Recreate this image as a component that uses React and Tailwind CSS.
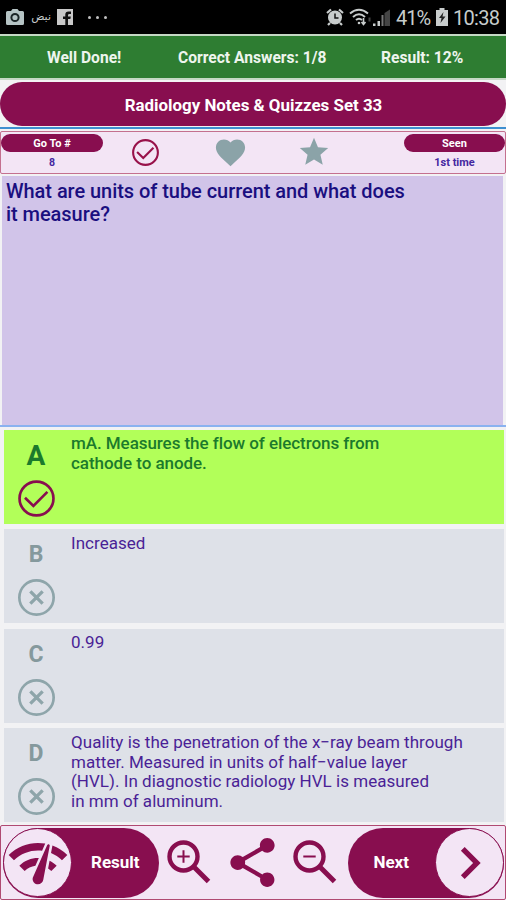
import React from 'react';
import { MdChevronRight, MdFavorite, MdNetworkCheck, MdShare, MdStar } from 'react-icons/md';

const options = [
  {
    letter: 'A',
    correct: true,
    lines: ['mA. Measures the flow of electrons from', 'cathode to anode.'],
  },
  { letter: 'B', lines: ['Increased'] },
  { letter: 'C', lines: ['0.99'] },
  {
    letter: 'D',
    lines: [
      'Quality is the penetration of the x−ray beam through',
      'matter. Measured in units of half−value layer',
      '(HVL). In diagnostic radiology HVL is measured',
      'in mm of aluminum.',
    ],
  },
];

const CheckCircle = ({ className, strokeWidth = 2.6 }) => (
  <svg viewBox="0 0 36 36" fill="none" stroke="currentColor" strokeWidth={strokeWidth} className={className}>
    <circle cx="18" cy="18" r="16.5" />
    <path d="M6.8 17.2 15 25.2 28.6 11.6" />
  </svg>
);

const CrossCircle = ({ className }) => (
  <svg viewBox="0 0 36 36" fill="none" stroke="currentColor" className={className}>
    <circle cx="18" cy="18" r="16.7" strokeWidth="2.6" />
    <path d="M12 12 24 24M24 12 12 24" strokeWidth="3.2" />
  </svg>
);

const Magnifier = ({ plus, className }) => (
  <svg viewBox="0 0 44 44" fill="none" stroke="currentColor" className={className}>
    <circle cx="16.500" cy="16.500" r="14" strokeWidth="4.400" />
    <path d="M26.500 26.500 41.500 41.500" strokeWidth="5" />
    <path d={plus ? 'M10.300 16.500h12.400M16.500 10.300v12.400' : 'M10.300 16.500h12.400'} strokeWidth="2" />
  </svg>
);

const StatusBar = () => (
  <div className="h-[34px] shrink-0 bg-black text-[#c6cccc] flex items-center justify-between pl-[6px] pr-[6px]">
    <div className="flex items-center">
      <svg viewBox="0 0 18 16" className="w-[18px] h-4">
        <path d="M5 2 6.500 0h5L13 2h3.500Q18 2 18 3.500v11Q18 16 16.500 16h-15Q0 16 0 14.500v-11Q0 2 1.500 2Z" fill="#b5c3c4" />
        <circle cx="9" cy="8.500" r="3.600" fill="none" stroke="#1b2526" strokeWidth="2" />
      </svg>
      <span dir="rtl" className="ml-[6px] w-[21px] text-[11px] leading-4 whitespace-nowrap font-['DejaVu_Sans',sans-serif]">نبض</span>
      <svg viewBox="0 0 16 16" className="ml-[6px] w-4 h-4">
        <path d="M0 0h16v16H0z" fill="#c9c9c9" />
        <path d="M8.300 16V10H6V7.400h2.300V5.600Q8.300 2.400 11.600 2.400H14V5h-1.600Q11 5 11 6.300v1.100h2.800L13.400 10H11v6Z" fill="#111" />
      </svg>
      <div className="ml-[15px] flex gap-[5px]">
        <i className="size-[3px] bg-[#c0c0c0] rounded-full" />
        <i className="size-[3px] bg-[#c0c0c0] rounded-full" />
        <i className="size-[3px] bg-[#c0c0c0] rounded-full" />
      </div>
    </div>
    <div className="flex items-center">
      <svg viewBox="0 0 18 18" className="w-[18px] h-[18px]">
        <circle cx="9" cy="9.500" r="7" fill="#c8cccc" />
        <path d="M1 5 5 1.500M17 5 13 1.500M4 15 2 17M14 15 16 17" stroke="#c8cccc" strokeWidth="2.200" />
        <path d="M9 5.500V10h3.500" stroke="#111" strokeWidth="1.500" fill="none" />
      </svg>
      <svg viewBox="0 0 22 18" className="ml-[5px] w-[22px] h-[18px]" fill="none" stroke="#c8cccc" strokeWidth="2">
        <path d="M1 5.500Q10 -2 19 5.500M4 9Q10 3.500 16 9M7 12Q10 9.500 13 12" />
        <circle cx="10" cy="15" r="1.300" fill="#c8cccc" stroke="none" />
        <path d="M14.500 10v6M12.500 14l2 2.500 2-2.500" strokeWidth="1.600" />
        <path d="M20.500 9.500v4" stroke="#444" />
      </svg>
      <svg viewBox="0 0 18 17" className="ml-[2px] w-[18px] h-[17px]">
        <path d="M0 17v-2.500h2.500V17zM4.500 17v-5H7v5z" fill="#c8cccc" />
        <path d="M8.500 17V6h2v11z" fill="#777" />
        <path d="M11.500 17V4L17 .5V17z" fill="#444" />
      </svg>
      <span className="ml-[5px] w-[34px] text-[20px] leading-[34px] tracking-[-1px] whitespace-nowrap pt-px">41%</span>
      <svg viewBox="0 0 12 18" className="ml-[6px] w-[12px] h-[18px]">
        <path d="M3.500 0h5v2H12v16H0V2h3.500z" fill="#c8cccc" />
        <path d="M7.500 4 3 10h2.500L4.500 15 9.500 8.500H6.500z" fill="#222" />
      </svg>
      <span className="ml-[5px] w-[47px] text-[20px] leading-[34px] tracking-[-0.7px] whitespace-nowrap pt-px">10:38</span>
    </div>
  </div>
);

const OptionCard = ({ letter, lines, correct }) => (
  <div className={`h-[94px] shrink-0 ml-[4px] mr-[2px] flex ${correct ? 'bg-[#b2ff59]' : 'bg-[#dee1e8]'}`}>
    <div className="w-[64px] shrink-0 flex flex-col items-center pt-[11px]">
      <span
        className={`font-bold leading-[30px] h-[39px] ${correct ? 'text-[#1b7a2c] text-[28px]' : 'text-[#85999d] text-[23px]'}`}
      >
        {letter}
      </span>
      {correct ? (
        <CheckCircle className="size-[37px] text-[#880e4f]" />
      ) : (
        <CrossCircle className="size-[37px] text-[#8ea5aa]" />
      )}
    </div>
    <div
      className={`pl-[3px] text-[17px] leading-[19.8px] whitespace-nowrap ${
        correct ? 'pt-[4px] font-medium tracking-[-0.06px] text-[#1b7a2c]' : 'pt-[4.6px] tracking-[0.03px] text-[#4a1f96]'
      }`}
    >
      {lines.map((line) => (
        <p key={line}>{line}</p>
      ))}
    </div>
  </div>
);

export default function App() {
  return (
    <div className="w-[506px] h-[900px] overflow-hidden flex flex-col bg-[#f2f2f4] font-[Roboto,sans-serif]">
      <StatusBar />

      <div className="h-[46px] shrink-0 border-y-2 border-[#c5d9c5] bg-[#2e7d32] text-[#eef5ee] font-bold text-[15.6px] leading-[42px] whitespace-nowrap flex pt-px">
        <span className="w-[131px] ml-[47px]">Well Done!</span>
        <span className="w-[203px]">Correct Answers: 1/8</span>
        <span>Result: 12%</span>
      </div>

      <h1 className="mt-[2px] h-[44px] shrink-0 rounded-full bg-[#880e4f] text-white font-bold text-[16.9px] leading-[46px] text-center whitespace-nowrap pl-px">
        Radiology Notes &amp; Quizzes Set 33
      </h1>
      <div className="mt-px h-[2px] shrink-0 bg-[#3d8fd0]" />

      <div className="mt-[2px] h-[43px] shrink-0 border border-[#c4708f] rounded-[2px] bg-[#f3e5f5] flex justify-between">
        <div className="w-[102px] mt-[2px] text-center font-bold text-[11px]">
          <div className="h-[18px] rounded-full bg-[#880e4f] text-white leading-[19px]">Go To #</div>
          <div className="text-[#4527a0] text-[10.5px] leading-[21px]">8</div>
        </div>
        <CheckCircle className="mt-[7px] ml-[29px] size-[27px] text-[#98124a]" strokeWidth={2.8} />
        <MdFavorite className="mt-[3px] ml-[54px] size-[35px] text-[#8ba3a8]" />
        <MdStar className="mt-[3px] ml-[49px] mr-[73px] size-[34px] text-[#8ba3a8]" />
        <div className="w-[101px] mt-[2px] text-center font-bold text-[11px]">
          <div className="h-[18px] rounded-full bg-[#880e4f] text-white leading-[19px]">Seen</div>
          <div className="text-[#4527a0] leading-[21px]">1st time</div>
        </div>
      </div>

      <div className="mt-[2px] ml-[2px] mr-[3px] h-[249px] shrink-0 bg-[#d1c4e9] pl-[4px] pt-[4px] text-[#1a0f80] font-medium text-[20px] leading-[22.8px] tracking-[-0.05px] whitespace-nowrap">
        <p>What are units of tube current and what does</p>
        <p>it measure?</p>
      </div>
      <div className="h-[2px] shrink-0 bg-[#8ab2f0]" />

      <div className="mt-[3px] flex flex-col gap-[5.4px]">
        {options.map((option) => (
          <OptionCard key={option.letter} {...option} />
        ))}
      </div>

      <div className="mt-[3px] h-[75px] shrink-0 border border-[#b04a72] rounded-[2px] bg-[#f3e5f5] text-[#880e4f] flex items-center">
        <div className="ml-[2px] w-[156px] h-[70px] shrink-0 rounded-full bg-[#880e4f] flex items-center">
          <div className="size-[69px] shrink-0 rounded-full border border-[#880e4f] bg-[#f3e5f5] flex items-center justify-center">
            <MdNetworkCheck className="size-[64px] shrink-0" />
          </div>
          <span className="ml-[19px] text-white font-bold text-[17px]">Result</span>
        </div>
        <Magnifier plus className="ml-[8px] mb-[2px] size-[44px] shrink-0" />
        <MdShare className="ml-[12px] size-[59px] shrink-0" />
        <Magnifier className="ml-[11px] mb-[2px] size-[44px] shrink-0" />
        <div className="ml-[11px] w-[156px] h-[70px] shrink-0 rounded-full bg-[#880e4f] flex items-center justify-end">
          <span className="mr-[26px] text-white font-bold text-[17px]">Next</span>
          <div className="size-[69px] shrink-0 rounded-full border border-[#880e4f] bg-[#f3e5f5] flex items-center justify-center">
            <MdChevronRight className="size-[64px] shrink-0" />
          </div>
        </div>
      </div>
    </div>
  );
}
